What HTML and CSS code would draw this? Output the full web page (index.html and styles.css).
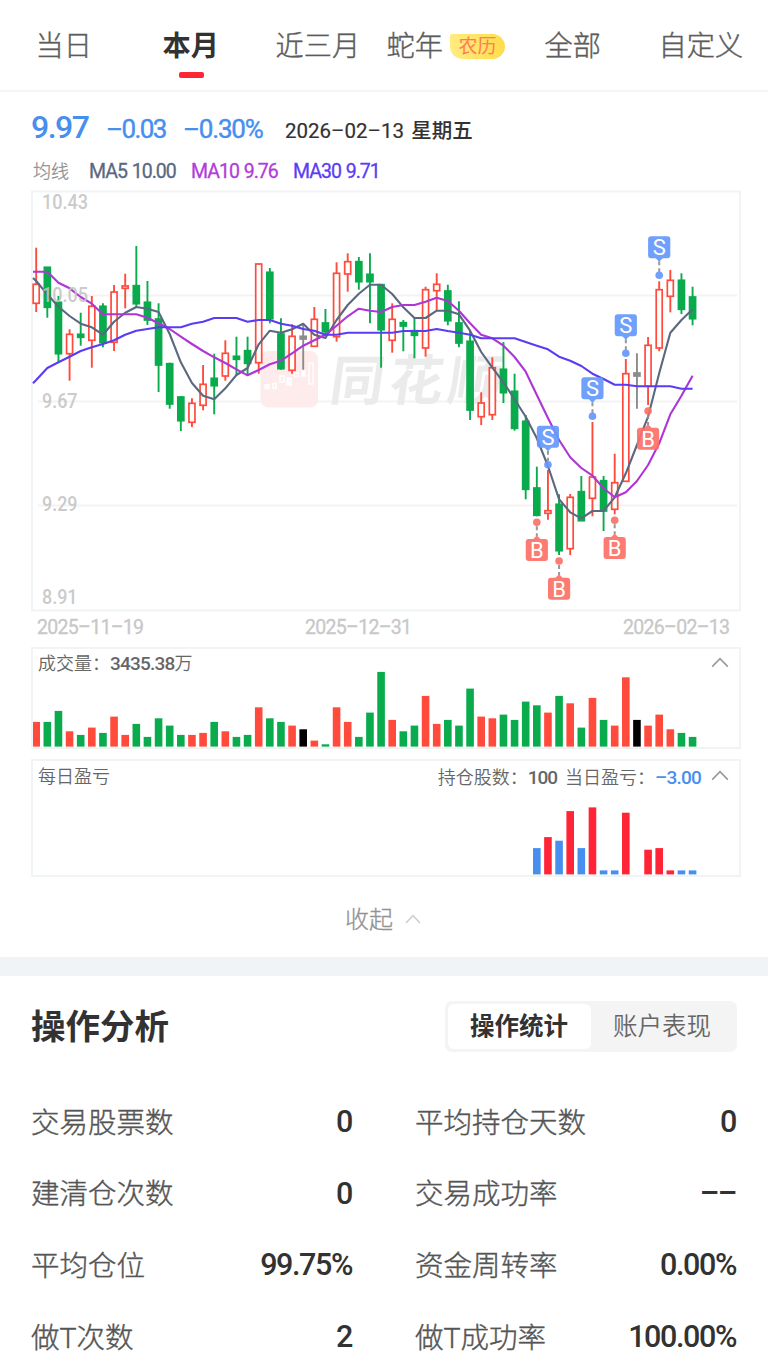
FILE: index.html
```
<!DOCTYPE html>
<html lang="zh-CN">
<head>
  <meta charset="UTF-8" />
  <meta name="viewport" content="width=device-width, initial-scale=1.0"/>
  <title>操作分析</title>
  <link rel="stylesheet" href="styles.css">
</head>
<body>

  <!-- Period tabs -->
  <nav class="tabs">
    <a class="tab">当日</a>
    <a class="tab active">本月</a>
    <a class="tab">近三月</a>
    <a class="tab">蛇年<span class="badge">农历</span></a>
    <a class="tab">全部</a>
    <a class="tab">自定义</a>
  </nav>

  <main class="stock">
    <div class="quote">
      <span class="price">9.97</span>
      <span class="change">–0.03</span>
      <span class="percent">–0.30%</span>
      <span class="date">2026–02–13 <b>星期五</b></span>
    </div>

    <div class="averages">
      <span class="avg-title">均线</span>
      <span class="ma5">MA5 10.00</span>
      <span class="ma10">MA10 9.76</span>
      <span class="ma30">MA30 9.71</span>
    </div>

    <!-- Candles, filled by chart.js -->
    <svg class="kline" id="kline" viewBox="31 190 710 422"></svg>

    <div class="dates">
      <span>2025–11–19</span>
      <span>2025–12–31</span>
      <span>2026–02–13</span>
    </div>

    <div class="panel volume">
      <div class="panel-head">
        <span>成交量：<b>3435.38</b>万</span>
        <svg class="caret" viewBox="0 0 18 11"><path d="M1.2 9.6 L9 1.6 L16.8 9.6"/></svg>
      </div>
      <svg class="bars" id="volume" viewBox="33 671 706 76"></svg>
    </div>

    <div class="panel profit">
      <div class="panel-head">
        <span>每日盈亏</span>
        <div class="panel-info">
          <span>持仓股数：<b class="held">100</b></span>
          <span class="today">当日盈亏：<b class="loss">–3.00</b></span>
          <svg class="caret" viewBox="0 0 18 11"><path d="M1.2 9.6 L9 1.6 L16.8 9.6"/></svg>
        </div>
      </div>
      <svg class="bars" id="profit" viewBox="33 799 706 76"></svg>
    </div>

    <div class="collapse">
      收起
      <svg viewBox="0 0 16 10"><path d="M1 9 L8 1.5 L15 9"/></svg>
    </div>
  </main>

  <section class="analysis">
    <header class="analysis-head">
      <h2>操作分析</h2>
      <div class="switch">
        <span class="on">操作统计</span>
        <span>账户表现</span>
      </div>
    </header>

    <div class="stats">
      <div class="stat"><span>交易股票数</span><b>0</b></div>
      <div class="stat"><span>平均持仓天数</span><b>0</b></div>
      <div class="stat"><span>建清仓次数</span><b>0</b></div>
      <div class="stat"><span>交易成功率</span><b>––</b></div>
      <div class="stat"><span>平均仓位</span><b>99.75%</b></div>
      <div class="stat"><span>资金周转率</span><b>0.00%</b></div>
      <div class="stat"><span>做T次数</span><b>2</b></div>
      <div class="stat"><span>做T成功率</span><b>100.00%</b></div>
    </div>
  </section>

  <script src="chart.js"></script>
</body>
</html>
```
FILE: styles.css
```
* {
  box-sizing: border-box;
}

body {
  margin: 0;
  background: #fff;
  color: #323232;
  font-family: Roboto, "Noto Sans CJK SC", sans-serif;
  height: 1362px;
  overflow: hidden;
}

b {
  font-weight: 500;
}

svg {
  display: block;
}

/* tabs */
.tabs {
  display: grid;
  grid-template-columns: 127px 113px 111px 158px 114px auto;
  height: 92px;
  padding-left: 35.5px;
  border-bottom: 2px solid #f5f5f5;
}

.tab {
  display: flex;
  align-items: center;
  height: 87px;
  font-size: 28.2px;
  font-weight: 300;
  color: #5c5c5c;
  white-space: nowrap;
  -webkit-text-stroke: 0.4px;
}

.tab.active {
  position: relative;
  font-weight: 700;
  color: #323232;
  -webkit-text-stroke: 0;
}

.tab.active::after {
  content: "";
  position: absolute;
  left: 16px;
  top: 72px;
  width: 25px;
  height: 6px;
  border-radius: 2px;
  background: #ff2436;
}

.badge {
  width: 55px;
  height: 25px;
  margin: 5px 0 0 7px;
  border-radius: 2px 13px 13px 13px;
  background: linear-gradient(90deg, #ffec80, #ffdc4d);
  color: #ff7d55;
  font-size: 19px;
  font-weight: 400;
  line-height: 25px;
  text-align: center;
  -webkit-text-stroke: 0;
}

/* quote */
.stock {
  height: 865px;
  padding: 0 27px 0 31px;
}

.quote {
  display: flex;
  align-items: baseline;
  height: 65px;
  padding-top: 14px;
  line-height: 42px;
  color: #468fef;
  white-space: nowrap;
}

.price {
  width: 75px;
  font-size: 32px;
  font-weight: 500;
  letter-spacing: -1.5px;
}

.change,
.percent {
  width: 77px;
  font-size: 26px;
  letter-spacing: -1.6px;
  -webkit-text-stroke: 0.4px;
}

.percent {
  width: 102px;
  letter-spacing: -1.2px;
}

.date {
  font-size: 20.5px;
  color: #323232;
  -webkit-text-stroke: 0.2px;
}

.date b {
  margin-left: 2px;
  -webkit-text-stroke: 0;
}

.averages {
  display: flex;
  height: 33px;
  padding-left: 2px;
  font-size: 19.5px;
  line-height: 30px;
  letter-spacing: -1px;
  word-spacing: 1px;
  white-space: nowrap;
  -webkit-text-stroke: 0.3px;
}

.avg-title {
  width: 56px;
  font-size: 18px;
  font-weight: 300;
  letter-spacing: 0;
  color: #8f8f8f;
}

.ma5 {
  width: 102px;
  color: #5a6880;
}

.ma10 {
  width: 102px;
  color: #b13bdb;
}

.ma30 {
  color: #5a3cf5;
}

/* candles */
.kline {
  width: 710px;
  height: 422px;
}

.frame {
  fill: none;
  stroke: #f1f4f5;
  stroke-width: 2;
}

.grid {
  stroke: #f3f3f3;
  stroke-width: 2;
}

.up { stroke: #ff4a3c; fill: #fff; }
.down { stroke: #09ab4c; fill: #09ab4c; }
.flat { stroke: #8c8c8c; fill: #8c8c8c; }

.wick { stroke-width: 1.9; }
.body { stroke-width: 1.7; }

.line {
  fill: none;
  stroke-width: 2.1;
  stroke-linejoin: round;
}

.line5 { stroke: #5a6880; }
.line10 { stroke: #ae36d6; }
.line30 { stroke: #5a3cf5; }

.scale {
  fill: #c4c4c4;
  fill-opacity: 0.9;
  font-size: 19.5px;
  font-weight: 500;
}

.sell { fill: #6598fc; color: #6598fc; }
.buy { fill: #fc7067; color: #fc7067; }

.marker {
  opacity: 0.92;
}

.marker line {
  stroke: #909090;
  stroke-width: 2;
  stroke-dasharray: 4 3;
}

.marker text {
  fill: #fff;
  font-size: 22px;
  text-anchor: middle;
}

.logo { fill: #fdeceb; }

.logo-candle {
  fill: #fff;
  stroke: #fff;
  stroke-width: 1.4;
}

.logo-candle.hollow {
  fill: none;
}

.logo-text {
  fill: #ebebeb;
  font-family: "Noto Sans CJK SC", sans-serif;
  font-size: 54px;
  font-weight: 700;
  letter-spacing: 5px;
}

.dates {
  display: grid;
  grid-template-columns: 268px 318px auto;
  height: 35px;
  padding-left: 6px;
  font-size: 19.5px;
  line-height: 31px;
  letter-spacing: -0.7px;
  color: #c8c8c8;
  -webkit-text-stroke: 0.3px;
}

/* volume and profit */
.panel {
  border: 2px solid #f1f4f5;
  display: flex;
  flex-direction: column;
  justify-content: space-between;
}

.volume {
  height: 102px;
}

.profit {
  height: 118px;
  margin-top: 10px;
}

.panel-head {
  display: flex;
  justify-content: space-between;
  align-items: center;
  height: 22px;
  padding: 5px 10px 0 5px;
  font-size: 18px;
  font-weight: 350;
  color: #666;
  white-space: nowrap;
}

.profit .panel-head {
  height: 22px;
  padding-top: 7px;
}

.panel-head > span {
  margin-top: -2px;
}

.panel-head b {
  font-size: 19px;
  letter-spacing: -0.8px;
}

.panel-info {
  display: flex;
  align-items: center;
}

.today {
  margin-left: 8px;
}

.panel-info .caret {
  margin-left: 10px;
}

.panel-head .held {
  letter-spacing: -1px;
}

.panel-head .loss {
  color: #468fef;
}

.caret {
  width: 18px;
  height: 11px;
  fill: none;
  stroke: #999;
  stroke-width: 1.6;
}

.bars {
  width: 706px;
  height: 76px;
}

.bar-up { fill: #ff4a3c; }
.bar-down { fill: #09ab4c; }
.bar-flat { fill: #000; }
.bar-gain { fill: #ff2436; }
.bar-loss { fill: #468fef; }

.collapse {
  display: flex;
  align-items: center;
  justify-content: center;
  gap: 12px;
  height: 80px;
  padding: 1px 6px 0 0;
  font-size: 24px;
  font-weight: 300;
  color: #929292;
  -webkit-text-stroke: 0.3px;
}

.collapse svg {
  width: 16px;
  height: 10px;
  margin-top: 2px;
  fill: none;
  stroke: #ccc;
  stroke-width: 1.5;
}

/* analysis */
.analysis {
  border-top: 19px solid #f1f4f6;
  padding: 24px 31px 0;
}

.analysis-head {
  display: flex;
  justify-content: space-between;
  align-items: center;
  height: 52px;
}

.analysis-head h2 {
  margin: 0 0 4px;
  font-size: 34.5px;
  font-weight: 700;
}

.switch {
  display: flex;
  width: 292px;
  height: 51px;
  padding: 3px;
  border-radius: 7px;
  background: #f4f4f4;
}

.switch span {
  flex: 1;
  border-radius: 6px;
  font-size: 24.5px;
  font-weight: 350;
  line-height: 45px;
  text-align: center;
  text-indent: -1px;
  color: #666;
}

.switch .on {
  background: #fff;
  font-weight: 700;
  color: #323232;
}

.stats {
  display: grid;
  grid-template-columns: 322px 322px;
  grid-auto-rows: 71.6px;
  column-gap: 62px;
  padding-top: 34px;
}

.stat {
  display: flex;
  justify-content: space-between;
  align-items: center;
  font-size: 28.5px;
  font-weight: 300;
  color: #555;
  white-space: nowrap;
  -webkit-text-stroke: 0.4px;
}

.stat span {
  margin-top: -3px;
}

.stat b {
  margin-right: 1px;
  font-size: 30.5px;
  letter-spacing: -1.4px;
  color: #323232;
  -webkit-text-stroke: 0;
}
```
FILE: chart.js
```
// type, high, body top, body bottom, low
const candles = [
  ['up', 247.7, 284.3, 303.3, 312], ['down', 267, 267.3, 307.3, 317.7], ['down', 296, 302.3, 353.7, 361.7],
  ['up', 329.3, 334.3, 353.7, 380.7], ['down', 312.7, 334.3, 337.3, 345.7], ['up', 296, 306.3, 340.3, 367.7],
  ['down', 303.3, 306.3, 342.7, 347.3], ['up', 285, 292, 342.3, 351], ['up', 273.7, 286, 288.3, 308.3],
  ['down', 246, 285.7, 303.7, 308], ['down', 281, 302.3, 320, 325], ['down', 303.3, 319, 365, 392],
  ['down', 362.7, 363.7, 404, 408.7], ['down', 396, 397, 420.7, 431], ['up', 398.3, 403.3, 422.3, 427],
  ['up', 365, 384.3, 405.3, 410.3], ['down', 353.7, 378.3, 385.7, 414.3], ['up', 340.3, 353.3, 376, 380.7],
  ['down', 336.7, 356.3, 359.3, 375], ['down', 336.7, 350.7, 363.3, 375], ['up', 263.7, 264, 362.7, 373.7],
  ['down', 268, 272.3, 318.7, 323.3], ['down', 318.3, 334, 368.7, 369.7], ['up', 324.3, 336.3, 370.3, 373.7],
  ['flat', 325, 336.3, 339, 369.7], ['up', 307, 319.3, 346.3, 346.5], ['down', 309, 323, 331.7, 335],
  ['up', 262.3, 273.3, 336.7, 341.7], ['up', 253.3, 261.7, 274, 291.7], ['down', 257, 261.7, 281.7, 289.7],
  ['down', 253.3, 274.3, 281.7, 323.3], ['down', 284, 284.7, 329.7, 367.7], ['up', 303.3, 319.3, 340.3, 352.7],
  ['down', 320, 322.7, 326, 351.3], ['down', 318, 330.7, 335.3, 358.3], ['up', 286.7, 289.7, 348, 356.7],
  ['up', 273.3, 284.3, 290.7, 310], ['down', 284.7, 291, 320.7, 325.3], ['down', 301.3, 323, 343, 347.3],
  ['down', 331, 341.3, 410, 420], ['up', 392.3, 403, 416.7, 425], ['up', 357.3, 367.7, 414.7, 420],
  ['down', 342, 369.3, 392.7, 403], ['down', 373.7, 391.3, 428.3, 430.7], ['down', 415, 421.3, 489.3, 499.3],
  ['down', 466.7, 488, 515.3, 516.3], ['up', 470, 510.7, 513.3, 519.7], ['down', 494.3, 504.3, 550.7, 555],
  ['up', 494, 497.3, 548.7, 555], ['down', 476, 491.7, 520.7, 521], ['up', 422, 477, 498.3, 516.3],
  ['down', 476, 480.7, 511, 531], ['up', 453.7, 482.7, 509.3, 514.3], ['up', 359, 373.7, 481.3, 481.5],
  ['flat', 353.3, 373, 376, 408.7], ['up', 337, 345.3, 386.3, 405], ['up', 281.3, 289.7, 348, 351.3],
  ['up', 270, 280.3, 296.3, 312.3], ['down', 273.3, 280.3, 309.3, 314], ['down', 286.7, 297, 318.7, 325.3]
];

const ma5 = [281, 294.3, 306.7, 316, 323.7, 327.3, 334.7, 321.7, 312.7, 307, 308.7, 312, 334, 362.3, 383, 395.7,
  399.3, 388.3, 375, 368, 344.3, 330.7, 332.7, 329.3, 323.7, 334.7, 338, 320, 305, 293.7, 284.7, 284.7, 294,
  307.3, 318, 318, 310.7, 310.7, 314.3, 330.7, 352, 367.7, 382.3, 399.3, 416.7, 438.3, 466, 499.3, 512.3, 518.3,
  511, 511, 497.3, 473.3, 445, 416.7, 373.3, 332.7, 320, 309.3];
const ma10 = [271.7, 271.7, 282.7, 288.3, 297, 303.7, 314.3, 314.3, 314.3, 314.3, 317.7, 323.3, 329, 336.7, 344, 351,
  357.3, 363, 369.3, 375.3, 370, 364.3, 360.7, 353.3, 345.7, 340.3, 334.7, 325.7, 316.3, 308.7, 310.7, 312, 307,
  305, 305, 301.7, 297.7, 301, 310.7, 323.3, 334.7, 338.3, 345.7, 357, 371.7, 395, 418, 440, 457.3, 468,
  475.7, 488.3, 497.3, 492.3, 481, 465, 443.3, 414.3, 395.7, 375.7];
const ma30 = [380, 368, 362.3, 356.7, 351, 347.3, 344, 340.3, 334.7, 330.7, 329, 327.3, 327.3, 327.3, 323.7, 321.7,
  318, 318, 318, 321.7, 320, 320, 323.7, 325.7, 329, 330.7, 334.7, 334.7, 332.7, 332.7, 332.7, 332.7, 332.7,
  331, 331, 331, 329, 331, 332.7, 334.7, 338.3, 338.3, 338.3, 338.3, 342, 345.7, 349.3, 356.7, 360.7, 366,
  373.7, 379, 384.7, 384.7, 386.3, 386.3, 386.3, 386.3, 388.7, 388.7];

const volumes = [24.7, 24.7, 35.7, 15.3, 11.7, 19, 13.7, 30, 11.7, 22.7, 9.7, 28.3, 21, 11.7, 11.7, 13.7, 24.7, 15.3,
  9.7, 11.7, 39.3, 28.3, 24.7, 21, 17.3, 6, 2.3, 39.3, 24.7, 9.7, 34, 74.7, 26.7, 15.3, 21, 50.7, 22.7, 26.7, 21,
  58, 30, 28.3, 32, 26.7, 45, 41.3, 34, 50.7, 43.3, 19, 48.7, 26.7, 21, 69.3, 26.7, 21, 32, 17.3, 13.7, 9.7];

// day index, height (negative = loss)
const profits = [[45, -26.3], [46, 37.3], [47, -33.7], [48, 63.3], [49, -26.3], [50, 67], [51, -4], [52, -4],
  [53, 61.7], [55, 24.7], [56, 26.3], [57, 4], [58, -4], [59, -4]];

const sells = [[46, 464.7], [50, 416.3], [53, 353.3], [56, 275.3]];
const buys = [[45, 522.3], [47, 561], [52, 520.3], [55, 411]];

const px = i => 36.2 + i * 11.125;

function drawLine(points, name, startY) {
  const path = points.map((y, i) => `${px(i)},${y}`).join(' ');
  return `<polyline class="line ${name}" points="33,${startY} ${path}"/>`;
}

function drawMarker(i, y, kind) {
  const x = px(i);
  const sell = kind === 'sell';
  const top = sell ? y - 39 : y + 16.7;
  const tip = sell
    ? `M${x - 4} ${top + 21.5} L${x} ${top + 25.5} L${x + 4} ${top + 21.5}Z`
    : `M${x - 4} ${top + 0.5} L${x} ${top - 3.5} L${x + 4} ${top + 0.5}Z`;
  return `<g class="marker ${kind}">
    <line x1="${x}" x2="${x}" y1="${sell ? y - 14 : y + 4}" y2="${sell ? y - 3 : y + 14}"/>
    <circle cx="${x}" cy="${y}" r="3.8"/>
    <path d="${tip}"/>
    <rect x="${x - 11.1}" y="${top}" width="22.2" height="22" rx="3"/>
    <text x="${x}" y="${top + 19}">${sell ? 'S' : 'B'}</text>
  </g>`;
}

function drawKline() {
  let out = '<rect class="frame" x="32" y="191.5" width="708" height="419"/>';
  [295.5, 401.5, 505.5].forEach(y => {
    out += `<line class="grid" x1="38" x2="737" y1="${y}" y2="${y}"/>`;
  });

  // watermark
  out += '<rect class="logo" x="260.5" y="351" width="57.5" height="56.5" rx="8"/>';
  [[265, 384.5, 4, 4, ''], [273, 383.5, 3, 5, 'hollow'], [280, 376, 4, 6, 'hollow'], [287, 378, 4, 7, ''],
    [294.5, 373, 3.5, 4, 'hollow'], [302, 371, 3, 5, ''], [309, 363, 4, 21, 'hollow']].forEach(c => {
    out += `<rect class="logo-candle ${c[4]}" x="${c[0]}" y="${c[1]}" width="${c[2]}" height="${c[3]}"/>`;
  });
  out += '<text class="logo-text" transform="translate(328 400) skewX(-8)">同花顺</text>';

  candles.forEach(([type, high, top, bottom, low], i) => {
    const x = px(i);
    out += `<g class="${type}">
      <line class="wick" x1="${x}" x2="${x}" y1="${high}" y2="${top}"/>
      <line class="wick" x1="${x}" x2="${x}" y1="${bottom}" y2="${low}"/>
      <rect class="body" x="${x - 3}" y="${top}" width="6" height="${bottom - top}"/>
    </g>`;
  });

  out += drawLine(ma5, 'line5', 278) + drawLine(ma10, 'line10', 271.7) + drawLine(ma30, 'line30', 383.3);
  sells.forEach(m => out += drawMarker(m[0], m[1], 'sell'));
  buys.forEach(m => out += drawMarker(m[0], m[1], 'buy'));

  [['10.43', 209], ['10.05', 302], ['9.67', 407.7], ['9.29', 511], ['8.91', 604]].forEach(([t, y]) => {
    out += `<text class="scale" x="42" y="${y}" textLength="${t.length === 5 ? 46 : 35.5}" lengthAdjust="spacingAndGlyphs">${t}</text>`;
  });
  document.getElementById('kline').innerHTML = out;
}

function drawBar(i, height, base, kind) {
  return `<rect class="bar-${kind}" x="${px(i) - 3.8}" y="${base - height}" width="7.6" height="${height}"/>`;
}

drawKline();
document.getElementById('volume').innerHTML = volumes.map((v, i) => drawBar(i, v, 746.6, candles[i][0])).join('');
document.getElementById('profit').innerHTML = profits.map(([i, v]) => drawBar(i, Math.abs(v), 874.4, v > 0 ? 'gain' : 'loss')).join('');
```
